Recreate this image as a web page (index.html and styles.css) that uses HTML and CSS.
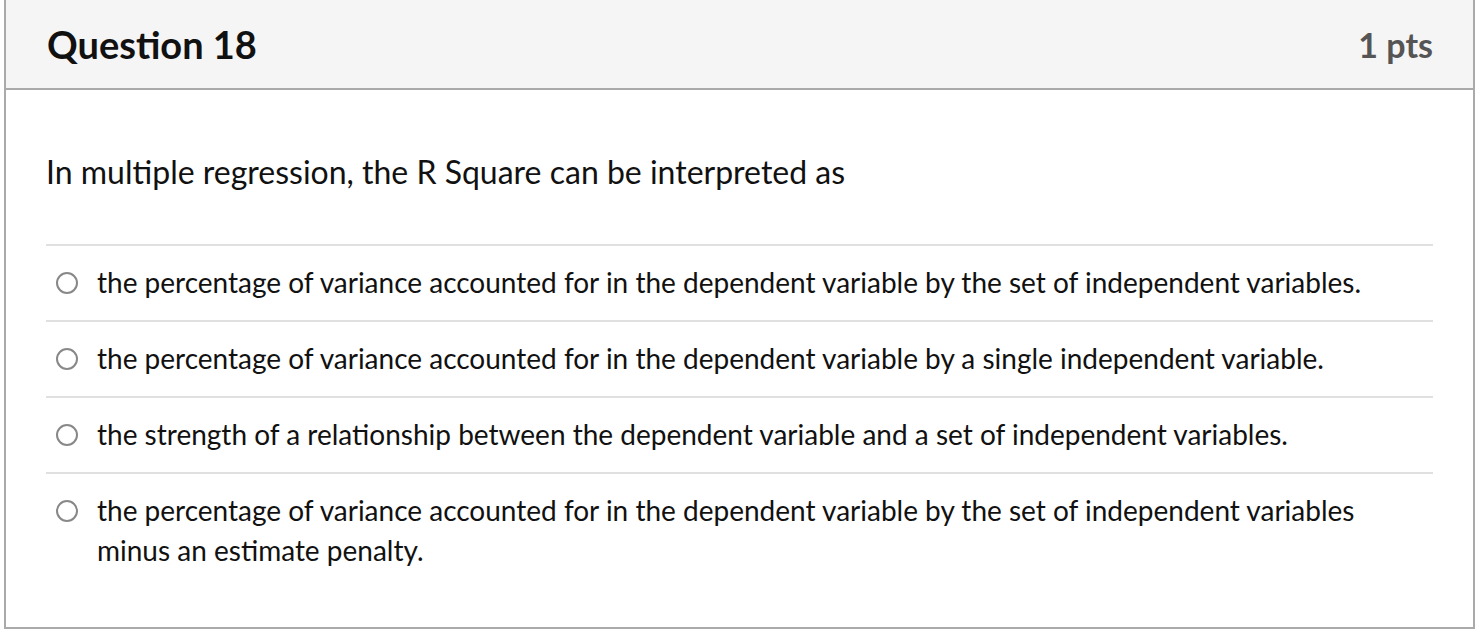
FILE: index.html
```html
<!DOCTYPE html>
<html lang="en">
<head>
<meta charset="utf-8">
<title>Question 18</title>
<link rel="stylesheet" href="styles.css">
</head>
<body>
<div class="page">
  <div class="question">
    <div class="header">
      <span class="title">Question 18</span>
      <span class="points">1 pts</span>
    </div>
    <div class="content">
      <div class="prompt">In multiple regression, the R Square can be interpreted as</div>
      <div class="answers">
        <label class="answer">
          <span class="radio"></span>
          <span class="answer-text">the percentage of variance accounted for in the dependent variable by the set of independent variables.</span>
        </label>
        <label class="answer">
          <span class="radio"></span>
          <span class="answer-text">the percentage of variance accounted for in the dependent variable by a single independent variable.</span>
        </label>
        <label class="answer">
          <span class="radio"></span>
          <span class="answer-text">the strength of a relationship between the dependent variable and a set of independent variables.</span>
        </label>
        <label class="answer">
          <span class="radio"></span>
          <span class="answer-text">the percentage of variance accounted for in the dependent variable by the set of independent variables minus an estimate penalty.</span>
        </label>
      </div>
    </div>
  </div>
</div>
</body>
</html>
```
FILE: styles.css
```css
* { box-sizing: border-box; }
html, body { margin: 0; padding: 0; background: #fff; }
body {
  font-family: Lato, "Noto Sans", "Liberation Sans", sans-serif;
  color: #111;
}
.page {
  padding: 0 1px 6px 4px;
}
.question {
  border: 2px solid #aaaaaa;
  border-top: none;
  background: #fff;
}
.header {
  height: 90px;
  background: #f5f5f5;
  border-bottom: 2px solid #aaaaaa;
  display: flex;
  align-items: center;
  justify-content: space-between;
  padding: 0 40px 0 41px;
}
.title {
  font-weight: 700;
  font-size: 38px;
  color: #111;
}
.points {
  font-weight: 700;
  font-size: 34px;
  color: #555;
}
.content {
  padding: 62px 40px 39px 40px;
}
.prompt {
  font-size: 32px;
  line-height: 40px;
  margin-bottom: 52px;
}
.answer {
  display: flex;
  align-items: flex-start;
  gap: 19px;
  border-top: 2px solid #e0e0e0;
  padding: 16px 0 18px 10px;
  font-size: 28px;
  line-height: 40px;
}
.radio {
  flex: none;
  width: 22px;
  height: 22px;
  border: 2px solid #888;
  border-radius: 50%;
  margin-top: 10px;
  background: #fff;
}
.answer-text { flex: 1; }
```
